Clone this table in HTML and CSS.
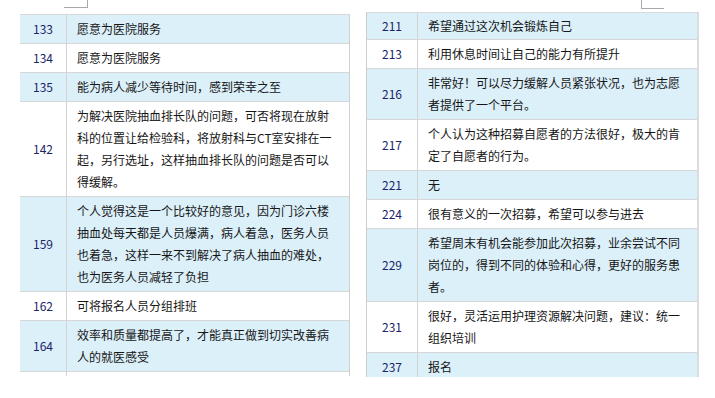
FILE: index.html
```html
<!DOCTYPE html>
<html lang="zh-CN">
<head>
<meta charset="utf-8">
<title>意见汇总</title>
<link rel="stylesheet" href="styles.css">
</head>
<body>
<div class="spread">
  <section class="page page-left">
    <div class="mark mark-left"></div>
    <div class="clip clip-left">
      <table class="sheet sheet-left">
        <tr class="alt"><td class="num">133</td><td class="txt">愿意为医院服务</td></tr>
        <tr><td class="num">134</td><td class="txt">愿意为医院服务</td></tr>
        <tr class="alt"><td class="num">135</td><td class="txt">能为病人减少等待时间，感到荣幸之至</td></tr>
        <tr><td class="num">142</td><td class="txt">为解决医院抽血排长队的问题，可否将现在放射科的位置让给检验科，将放射科与CT室安排在一起，另行选址，这样抽血排长队的问题是否可以得缓解。</td></tr>
        <tr class="alt"><td class="num">159</td><td class="txt">个人觉得这是一个比较好的意见，因为门诊六楼抽血处每天都是人员爆满，病人着急，医务人员也着急，这样一来不到解决了病人抽血的难处，也为医务人员减轻了负担</td></tr>
        <tr><td class="num">162</td><td class="txt">可将报名人员分组排班</td></tr>
        <tr class="alt"><td class="num">164</td><td class="txt">效率和质量都提高了，才能真正做到切实改善病人的就医感受</td></tr>
        <tr><td class="num">&nbsp;</td><td class="txt">&nbsp;</td></tr>
      </table>
    </div>
  </section>
  <section class="page page-right">
    <div class="mark mark-right"></div>
    <div class="clip clip-right">
      <table class="sheet sheet-right">
        <tr class="alt short"><td class="num">211</td><td class="txt">希望通过这次机会锻炼自己</td></tr>
        <tr><td class="num">213</td><td class="txt">利用休息时间让自己的能力有所提升</td></tr>
        <tr class="alt"><td class="num">216</td><td class="txt">非常好！可以尽力缓解人员紧张状况，也为志愿者提供了一个平台。</td></tr>
        <tr><td class="num">217</td><td class="txt">个人认为这种招募自愿者的方法很好，极大的肯定了自愿者的行为。</td></tr>
        <tr class="alt"><td class="num">221</td><td class="txt">无</td></tr>
        <tr><td class="num">224</td><td class="txt">很有意义的一次招募，希望可以参与进去</td></tr>
        <tr class="alt"><td class="num">229</td><td class="txt">希望周末有机会能参加此次招募，业余尝试不同岗位的，得到不同的体验和心得，更好的服务患者。</td></tr>
        <tr><td class="num">231</td><td class="txt">很好，灵活运用护理资源解决问题，建议：统一组织培训</td></tr>
        <tr class="alt"><td class="num">237</td><td class="txt">报名</td></tr>
      </table>
    </div>
  </section>
</div>
</body>
</html>
```
FILE: styles.css
```css
html, body {
  margin: 0;
  padding: 0;
  background: #ffffff;
}

body {
  font-family: "Noto Sans CJK SC", "Noto Sans", sans-serif;
  font-size: 12px;
  color: #161616;
}

.spread {
  display: flex;
  align-items: flex-start;
  width: 715px;
  height: 398px;
  overflow: hidden;
}

.page-left {
  width: 330px;
  margin-left: 20px;
}

.page-right {
  width: 333px;
  margin-left: 16px;
}

.mark {
  box-sizing: border-box;
  border-color: #a8a8a8;
  border-style: solid;
  border-width: 0;
}

.mark-left {
  width: 24px;
  height: 8px;
  margin-left: 44px;
  border-right-width: 1px;
  border-bottom-width: 1px;
}

.mark-right {
  width: 23px;
  height: 9px;
  margin-left: 275px;
  border-left-width: 1px;
  border-bottom-width: 1px;
}

.clip {
  overflow: hidden;
}

.clip-left {
  margin-top: 6px;
  height: 362px;
  padding-right: 3px;
}

.clip-right {
  margin-top: 3px;
  height: 365px;
}

.sheet {
  border-collapse: separate;
  border-spacing: 0;
  table-layout: fixed;
  border-top: 1px solid #d9d9d9;
}

.sheet-left {
  width: 330px;
  border-right: 1px solid #cfcfcf;
  box-shadow: 2px 0 0 #ebebeb;
}

.sheet-right {
  width: 333px;
  border-left: 1px solid #cdcdcd;
  border-right: 2px solid #dcdcdc;
}

.sheet td {
  padding: 3px 10px;
  line-height: 22px;
  vertical-align: middle;
  border-bottom: 1px solid #d6d6d6;
}

.sheet .short td {
  padding-top: 2px;
  padding-bottom: 2px;
}

.sheet .num {
  text-align: center;
  padding: 3px 0;
  color: #1a2466;
  border-right: 1px solid #d3d3d3;
}

.sheet-left .num {
  width: 46px;
}

.sheet-right .num {
  width: 50px;
}

.sheet .txt {
  padding-left: 10px;
  padding-right: 10px;
}

.sheet tr.alt td {
  background: #dcf0fa;
}
```
